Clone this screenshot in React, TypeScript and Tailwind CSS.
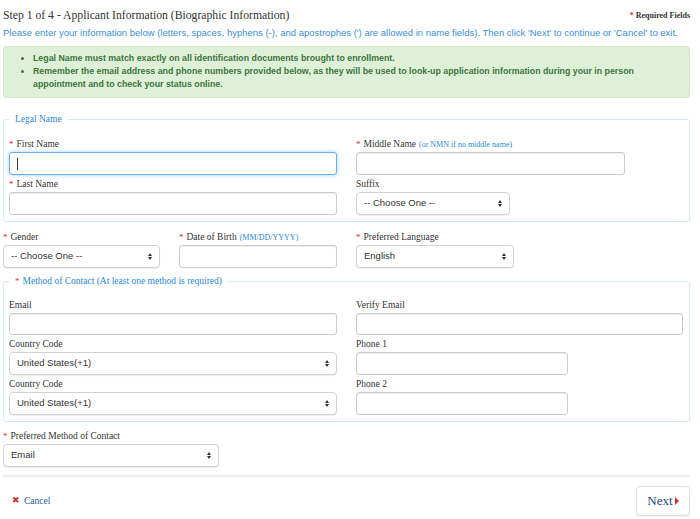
import type { ReactNode } from 'react'

const SERIF = "font-['Liberation_Serif','Times_New_Roman',serif]"
const SANS = "font-['Liberation_Sans',Arial,sans-serif]"

function Label({ children, req, hint }: { children: ReactNode; req?: boolean; hint?: string }) {
  return (
    <div className={`${SERIF} h-[16px] leading-[16px] text-[9.5px] text-[#333] whitespace-nowrap`}>
      {req && <span className="text-[#d0312d] text-[9px] mr-[3px]">*</span>}
      {children}
      {hint && <span className="ml-[3px] text-[8px] text-[#2a8ad4]">{hint}</span>}
    </div>
  )
}

function TextBox({ className = 'w-full', focused, h = 'h-[23px]' }: { className?: string; focused?: boolean; h?: string }) {
  return (
    <div className={`relative mb-[1px] ${className}`}>
      <input
        type="text"
        className={`block ${h} w-full rounded-[3px] border bg-white outline-none ${
          focused
            ? 'border-[#66afe9] shadow-[0_0_4px_rgba(102,175,233,0.6)]'
            : 'border-[#ccc] shadow-[inset_0_1px_1px_rgba(0,0,0,0.075)]'
        }`}
      />
      {focused && <span className="absolute left-[8px] top-[6px] h-[12px] w-[1px] bg-[#333]" />}
    </div>
  )
}

function SelectBox({ value, className = 'w-full' }: { value: string; className?: string }) {
  return (
    <div className={`relative mb-[1px] ${className}`}>
      <select
        defaultValue={value}
        className={`${SANS} block h-[23px] w-full appearance-none rounded-[4px] border border-[#d2d2d2] bg-white pl-[7px] text-[9.5px] text-[#333] shadow-[0_1px_1px_rgba(0,0,0,0.08)] outline-none`}
      >
        <option>{value}</option>
      </select>
      <svg className="pointer-events-none absolute right-[8px] top-[8px]" width="4" height="7" viewBox="0 0 4 7">
        <path d="M0 3 L2 0 L4 3 Z M0 4 L2 7 L4 4 Z" fill="#333" />
      </svg>
    </div>
  )
}

function Legend({ children }: { children: ReactNode }) {
  return (
    <legend className={`${SERIF} px-[6px] h-[14px] leading-[14px] text-[9.5px] text-[#2a8ad4]`}>{children}</legend>
  )
}

export default function App() {
  return (
    <div className="w-[700px] h-[519px] overflow-hidden bg-white pl-[3px] pr-[10px]">
      <div className="flex items-center justify-between pt-[6px]">
        <h1 className={`${SERIF} leading-[20px] text-[11.7px] text-[#333]`}>
          Step 1 of 4 - Applicant Information (Biographic Information)
        </h1>
        <span className={`${SERIF} text-[8px] font-bold text-[#333]`}>
          <span className="text-[#d0312d]">*</span> Required Fields
        </span>
      </div>
      <p className={`${SANS} leading-[14px] text-[9.5px] text-[#3a8fd6] whitespace-nowrap`}>
        Please enter your information below (letters, spaces, hyphens (-), and apostrophes (') are allowed in name fields). Then click 'Next' to continue or 'Cancel' to exit.
      </p>

      <div className="mt-[6px] rounded-[3px] border border-[#d6e9c6] bg-[#dff0d8] pt-[5px] pb-[6px] pl-[29px]">
        <ul className={`${SANS} list-disc text-[8.8px] font-bold leading-[13px] text-[#3c763d]`}>
          <li>Legal Name must match exactly on all identification documents brought to enrollment.</li>
          <li>
            Remember the email address and phone numbers provided below, as they will be used to look-up application information during your in person
            <br />
            appointment and to check your status online.
          </li>
        </ul>
      </div>

      <fieldset className="mt-[14px] rounded-[3px] border border-[#d4ebf8] px-[5px] pr-[6px] pt-[10px] pb-[5px]">
        <Legend>Legal Name</Legend>
        <div className="grid grid-cols-[328px_1fr] gap-x-[19px]">
          <div>
            <Label req>First Name</Label>
            <TextBox focused />
          </div>
          <div>
            <Label req hint="(or NMN if no middle name)">Middle Name</Label>
            <TextBox className="w-[269px]" />
          </div>
          <div>
            <Label req>Last Name</Label>
            <TextBox />
          </div>
          <div>
            <Label>Suffix</Label>
            <SelectBox value="-- Choose One --" className="w-[154px]" />
          </div>
        </div>
      </fieldset>

      <div className="mt-[7px] grid grid-cols-[157px_158px_1fr] gap-x-[19px]">
        <div>
          <Label req>Gender</Label>
          <SelectBox value="-- Choose One --" />
        </div>
        <div>
          <Label req hint="(MM/DD/YYYY)">Date of Birth</Label>
          <TextBox />
        </div>
        <div>
          <Label req>Preferred Language</Label>
          <SelectBox value="English" className="w-[158px]" />
        </div>
      </div>

      <fieldset className="mt-[5px] rounded-[3px] border border-[#d4ebf8] px-[5px] pr-[6px] pt-[9px] pb-[5px]">
        <Legend>
          <span className="text-[#d0312d] text-[9px] mr-[3px]">*</span>Method of Contact (At least one method is required)
        </Legend>
        <div className="grid grid-cols-[328px_1fr] gap-x-[19px]">
          <div>
            <Label>Email</Label>
            <TextBox h="h-[22px]" />
          </div>
          <div>
            <Label>Verify Email</Label>
            <TextBox h="h-[22px]" />
          </div>
          <div>
            <Label>Country Code</Label>
            <SelectBox value="United States(+1)" />
          </div>
          <div>
            <Label>Phone 1</Label>
            <TextBox className="w-[212px]" />
          </div>
          <div>
            <Label>Country Code</Label>
            <SelectBox value="United States(+1)" />
          </div>
          <div>
            <Label>Phone 2</Label>
            <TextBox className="w-[212px]" />
          </div>
        </div>
      </fieldset>

      <div className="mt-[6px]">
        <Label req>Preferred Method of Contact</Label>
        <SelectBox value="Email" className="w-[216px]" />
      </div>

      <hr className="mt-[8px] border-t-2 border-[#eee]" />

      <div className="mt-[9px] flex items-center justify-between">
        <a className={`${SERIF} ml-[9px] flex items-center gap-[4px] text-[9.5px] text-[#1d5c96]`}>
          <span className="text-[#d0312d] text-[9px]">✖</span>
          Cancel
        </a>
        <button
          type="button"
          className={`${SERIF} flex h-[30px] w-[54px] items-center justify-center gap-[2px] rounded-[4px] border border-[#ddd] bg-white text-[13px] text-[#20497a] shadow-[0_1px_1px_rgba(0,0,0,0.05)]`}
        >
          Next
          <svg width="4" height="8" viewBox="0 0 4 8">
            <path d="M0 0 L4 4 L0 8 Z" fill="#d0312d" />
          </svg>
        </button>
      </div>
    </div>
  )
}
